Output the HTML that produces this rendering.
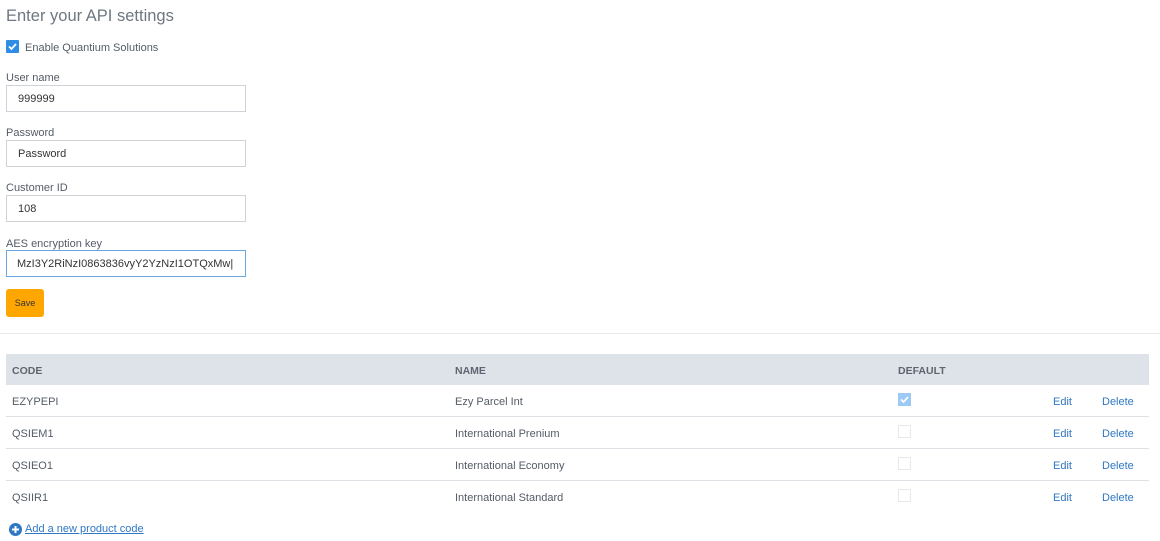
<!DOCTYPE html>
<html><head><meta charset="utf-8"><style>
*{box-sizing:border-box;margin:0;padding:0}
body{width:1160px;height:541px;background:#fff;font-family:"Liberation Sans",sans-serif;color:#555c66;position:relative;overflow:hidden}
.a{position:absolute}
h1{position:absolute;left:6px;top:7px;font-size:16.5px;font-weight:normal;color:#6e7781}
.lbl{position:absolute;left:6px;font-size:11px;color:#555c66}
.in{position:absolute;left:6px;width:240px;height:27px;border:1px solid #cfd3d8;font-size:11px;padding-left:11px;line-height:27px;color:#333}
.hr{position:absolute;left:6px;width:1143px;height:1px;background:#dde0e4}
.t{position:absolute;font-size:11px;color:#555c66}
.lk{position:absolute;font-size:11px;color:#2f78c4}
.cb{position:absolute;left:898px;width:13px;height:13px;border:1px solid #e6e8eb;background:#fff}
</style></head><body>
<h1>Enter your API settings</h1>
<div class="a" style="left:6px;top:40px;width:13px;height:13px;background:#2f8de4;border-radius:1px"><svg width="13" height="13" viewBox="0 0 13 13"><path d="M3 6.5l2.5 2.5 4.5-5" stroke="#fff" stroke-width="1.8" fill="none"/></svg></div>
<div class="t" style="left:25px;top:42px">Enable Quantium Solutions</div>
<div class="lbl" style="top:72px">User name</div>
<div class="in" style="top:85px">999999</div>
<div class="lbl" style="top:127px">Password</div>
<div class="in" style="top:140px">Password</div>
<div class="lbl" style="top:182px">Customer ID</div>
<div class="in" style="top:195px">108</div>
<div class="lbl" style="top:238px">AES encryption key</div>
<div class="in" style="top:250px;border-color:#6aa6df;padding-left:10px">MzI3Y2RiNzI0863836vyY2YzNzI1OTQxMw|</div>
<div class="a" style="left:6px;top:289px;width:38px;height:28px;background:#ffa600;border-radius:3px;font-size:9px;color:#333;text-align:center;line-height:29px">Save</div>
<div class="a" style="left:0;top:333px;width:1160px;height:1px;background:#e8eaed"></div>
<div class="a" style="left:6px;top:354px;width:1143px;height:31px;background:#dee2e9"></div>
<div class="t" style="left:12px;top:365px;font-weight:bold;color:#5d6670;font-size:10.5px">CODE</div>
<div class="t" style="left:455px;top:365px;font-weight:bold;color:#5d6670;font-size:10.5px">NAME</div>
<div class="t" style="left:898px;top:365px;font-weight:bold;color:#5d6670;font-size:10.5px">DEFAULT</div>

<div class="t" style="left:12px;top:396px">EZYPEPI</div><div class="t" style="left:455px;top:396px">Ezy Parcel Int</div>
<div class="a" style="left:898px;top:393px;width:13px;height:13px;background:#9ccaf5"><svg width="13" height="13" viewBox="0 0 13 13"><path d="M3 6.5l2.5 2.5 4.5-5" stroke="#fff" stroke-width="1.8" fill="none"/></svg></div>
<div class="lk" style="left:1053px;top:396px">Edit</div><div class="lk" style="left:1102px;top:396px">Delete</div>
<div class="hr" style="top:416px"></div>
<div class="t" style="left:12px;top:428px">QSIEM1</div><div class="t" style="left:455px;top:428px">International Prenium</div>
<div class="cb" style="top:425px"></div>
<div class="lk" style="left:1053px;top:428px">Edit</div><div class="lk" style="left:1102px;top:428px">Delete</div>
<div class="hr" style="top:448px"></div>
<div class="t" style="left:12px;top:460px">QSIEO1</div><div class="t" style="left:455px;top:460px">International Economy</div>
<div class="cb" style="top:457px"></div>
<div class="lk" style="left:1053px;top:460px">Edit</div><div class="lk" style="left:1102px;top:460px">Delete</div>
<div class="hr" style="top:480px"></div>
<div class="t" style="left:12px;top:492px">QSIIR1</div><div class="t" style="left:455px;top:492px">International Standard</div>
<div class="cb" style="top:489px"></div>
<div class="lk" style="left:1053px;top:492px">Edit</div><div class="lk" style="left:1102px;top:492px">Delete</div>

<svg class="a" style="left:9px;top:523px" width="13" height="13" viewBox="0 0 13 13"><circle cx="6.5" cy="6.5" r="6.5" fill="#2f78c4"/><path d="M6.5 3v7M3 6.5h7" stroke="#fff" stroke-width="2"/></svg>
<div class="lk" style="left:25px;top:523px;text-decoration:underline">Add a new product code</div>
</body></html>
